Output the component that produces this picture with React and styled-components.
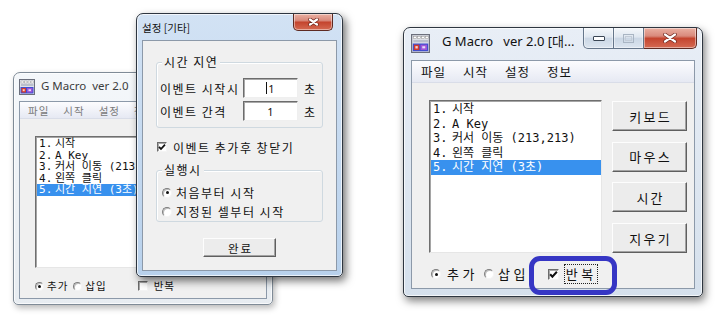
import styled, { createGlobalStyle } from "styled-components";

const KR = `"Noto Sans CJK KR", "Noto Sans", sans-serif`;
const UI = `"Noto Sans", "Noto Sans CJK KR", sans-serif`;
// half-width latin like Gulim, hangul falls back to the CJK face
const LIST = `"DejaVu Sans Mono", "Noto Sans CJK KR", monospace`;

const GlobalStyle = createGlobalStyle`
    html, body { margin: 0; padding: 0; background: #fff; }
    body { font-family: ${KR}; color: #111; }
    * { box-sizing: border-box; }
`;

const tones = {
    inactive: "linear-gradient(#f4f7fa, #e7ecf1)",
    active: "linear-gradient(#e8eef6, #d5e0ec)",
    aero: "linear-gradient(#d2e2f4, #b8d1ec)",
};

const shadows = {
    inactive: "2px 3px 6px rgba(0,0,0,.28)",
    active: "2px 4px 8px rgba(0,0,0,.5)",
    aero: "3px 4px 9px rgba(0,0,0,.55)",
};

const items = ["시작", "A Key", "커서 이동 (213,213)", "왼쪽 클릭", "시간 지연 (3초)"];

export default function App() {
    return (
        <>
            <GlobalStyle />
            <Desktop>
                {/* left screenshot: main window behind the settings dialog */}
                <Frame $x={13} $y={72} $w={260} $h={233} $pad={5} $tone="inactive" $z={1}>
                    <TitleBar $h={28} $pt={6}>
                        <MacroIcon size={16} />
                        <TitleText $fs={11.5} $dim>G Macro&nbsp; ver 2.0</TitleText>
                    </TitleBar>
                    <Client>
                        <MenuBar $h={17} $pl={8} $gap={14} $fs={10.5} $dim>
                            <span>파일</span>
                            <span>시작</span>
                            <span>설정</span>
                            <span>정보</span>
                        </MenuBar>
                        <Body $pt={17} $pl={15}>
                            <ListBox $w={170} $h={132} $fs={11} $lh={11.5}>
                                {items.map((text, i) => (
                                    <ListItem key={i} $lh={11.5} $selected={i === 4}>
                                        <Num $w={16}>{i + 1}.</Num>
                                        {text}
                                    </ListItem>
                                ))}
                            </ListBox>
                            <OptionRow $mt={12} $h={12} $fs={10.5} $ls={1}>
                                <Radio $size={9} $checked />
                                <OptionLabel $ml={3}>추가</OptionLabel>
                                <Radio $size={9} $ml={5} />
                                <OptionLabel $ml={3}>삽입</OptionLabel>
                                <CheckBox $size={10} $ml={31} />
                                <OptionLabel $ml={6}>반복</OptionLabel>
                            </OptionRow>
                        </Body>
                    </Client>
                </Frame>

                {/* settings dialog */}
                <Frame $x={136} $y={13} $w={207} $h={264} $pad={5} $tone="aero" $z={2}>
                    <TitleBar $h={26} $pt={8}>
                        <TitleText $fs={10.5} $font={KR}>설정 [기타]</TitleText>
                        <Captions $pt={8} $mr={4}>
                            <CapButton $w={40} $h={17} $kind="close" $round="both">
                                <CloseGlyph w={11} h={8} />
                            </CapButton>
                        </Captions>
                    </TitleBar>
                    <Client>
                        <DialogBody>
                            <Group $mt={21}>
                                <Legend>시간 지연</Legend>
                                <FieldGrid>
                                    <FieldLabel>이벤트 시작시</FieldLabel>
                                    <InputBox>
                                        <Caret />1
                                    </InputBox>
                                    <Unit>초</Unit>
                                    <FieldLabel>이벤트 간격</FieldLabel>
                                    <InputBox>1</InputBox>
                                    <Unit>초</Unit>
                                </FieldGrid>
                            </Group>
                            <DialogRow $mt={12} $pl={1}>
                                <CheckBox $size={10} $checked />
                                <OptionLabel $ml={6}>이벤트 추가후 창닫기</OptionLabel>
                            </DialogRow>
                            <Group $mt={16} $pt={12} $pb={0}>
                                <Legend>실행시</Legend>
                                <DialogRow $h={19} $pl={2}>
                                    <Radio $size={10} $checked />
                                    <OptionLabel $ml={4}>처음부터 시작</OptionLabel>
                                </DialogRow>
                                <DialogRow $h={19} $pl={2}>
                                    <Radio $size={10} />
                                    <OptionLabel $ml={4}>지정된 셀부터 시작</OptionLabel>
                                </DialogRow>
                            </Group>
                            <PushButton $w={73} $h={19} $fs={11.5} $center $mt={16}>
                                완료
                            </PushButton>
                        </DialogBody>
                    </Client>
                </Frame>

                {/* right screenshot */}
                <Frame $x={403} $y={27} $w={300} $h={270} $pad={7} $tone="active" $z={1}>
                    <TitleBar $h={32} $pt={6}>
                        <MacroIcon size={19} />
                        <TitleText $fs={13} $ml={6}>
                            G Macro&nbsp;&nbsp; ver 2.0 [대...
                        </TitleText>
                        <Captions $pt={6} $mr={-2}>
                            <CapButton $w={31} $h={21} $round="left">
                                <MinGlyph />
                            </CapButton>
                            <CapButton $w={30} $h={21}>
                                <MaxGlyph />
                            </CapButton>
                            <CapButton $w={53} $h={21} $kind="close" $round="right">
                                <CloseGlyph w={14} h={10} />
                            </CapButton>
                        </Captions>
                    </TitleBar>
                    <Client>
                        <MenuBar $h={22} $pl={9} $gap={17} $fs={12.5}>
                            <span>파일</span>
                            <span>시작</span>
                            <span>설정</span>
                            <span>정보</span>
                        </MenuBar>
                        <Body $pt={17} $pl={17}>
                            <MainRow>
                                <ListBox $w={173} $h={153} $fs={12} $lh={14.5}>
                                    {items.map((text, i) => (
                                        <ListItem key={i} $lh={14.5} $selected={i === 4}>
                                            <Num $w={19}>{i + 1}.</Num>
                                            {text}
                                        </ListItem>
                                    ))}
                                </ListBox>
                                <ButtonColumn>
                                    {["키보드", "마우스", "시간", "지우기"].map((label) => (
                                        <PushButton key={label} $w={75} $h={30} $fs={13} $ls={2.2}>
                                            {label}
                                        </PushButton>
                                    ))}
                                </ButtonColumn>
                            </MainRow>
                            <OptionRow $mt={13} $h={16} $fs={13} $ls={3.5} $pl={2}>
                                <Radio $size={10} $checked />
                                <OptionLabel $ml={6}>추가</OptionLabel>
                                <Radio $size={10} $ml={6} />
                                <OptionLabel $ml={4}>삽입</OptionLabel>
                                <CheckBox $size={11} $checked $ml={19} />
                                <OptionLabel $ml={6} $focus>반복</OptionLabel>
                            </OptionRow>
                        </Body>
                    </Client>
                </Frame>

                <Highlight />
            </Desktop>
        </>
    );
}

function MacroIcon({ size }) {
    return (
        <svg width={size} height={size} viewBox="0 0 16 16" style={{ flexShrink: 0 }}>
            <rect x="0.5" y="0.5" width="15" height="15" fill="#dfe2ea" stroke="#6b6f7c" />
            <rect x="2" y="2" width="2.5" height="2" fill="#fff" stroke="#888" strokeWidth="0.4" />
            <rect x="5.5" y="2" width="2.5" height="2" fill="#fff" stroke="#888" strokeWidth="0.4" />
            <rect x="9" y="2" width="2.5" height="2" fill="#fff" stroke="#888" strokeWidth="0.4" />
            <rect x="12" y="2" width="2.5" height="2" fill="#fff" stroke="#888" strokeWidth="0.4" />
            <rect x="2" y="5" width="12.5" height="2" fill="#b9bfcc" />
            <rect x="1.5" y="8" width="13" height="6.5" fill="#3f4fcf" />
            <rect x="2.5" y="9" width="4.5" height="4.5" fill="#d23a2e" />
            <rect x="3.7" y="10.2" width="2" height="2" fill="#f6d2cc" />
            <rect x="8" y="9" width="5.5" height="4.5" fill="#9d55d8" />
            <rect x="9.5" y="10.3" width="2.5" height="1.8" fill="#e8dcf7" />
        </svg>
    );
}

function CloseGlyph({ w, h }) {
    const d = `M2 1.5 L${w - 2} ${h - 1.5} M${w - 2} 1.5 L2 ${h - 1.5}`;
    return (
        <svg width={w} height={h} viewBox={`0 0 ${w} ${h}`}>
            <path d={d} stroke="#6a2218" strokeWidth="3.6" strokeLinecap="round" />
            <path d={d} stroke="#fff" strokeWidth="2.2" strokeLinecap="round" />
        </svg>
    );
}

function MinGlyph() {
    return (
        <svg width="12" height="6" viewBox="0 0 12 6">
            <rect x="0.5" y="1.5" width="11" height="4" rx="0.5" fill="#fff" stroke="#3b4654" />
        </svg>
    );
}

function MaxGlyph() {
    return (
        <svg width="11" height="9" viewBox="0 0 11 9">
            <rect x="0.5" y="0.5" width="10" height="8" fill="none" stroke="#a9b5c3" />
            <rect x="2.5" y="2.5" width="6" height="4" fill="none" stroke="#c3ccd7" />
        </svg>
    );
}

function CheckBox({ $size, $checked, $ml }) {
    return (
        <CheckSquare $size={$size} $ml={$ml}>
            {$checked && (
                <svg width={$size - 2} height={$size - 2} viewBox="0 0 8 8">
                    <path d="M1 3.8 L3 6 L7 1.6" fill="none" stroke="#111" strokeWidth="1.8" />
                </svg>
            )}
        </CheckSquare>
    );
}

const Desktop = styled.div`
    position: relative;
    width: 720px;
    height: 315px;
    overflow: hidden;
    background: #fff;
`;

const Frame = styled.div`
    position: absolute;
    left: ${({ $x }) => $x}px;
    top: ${({ $y }) => $y}px;
    width: ${({ $w }) => $w}px;
    height: ${({ $h }) => $h}px;
    z-index: ${({ $z }) => $z};
    display: flex;
    flex-direction: column;
    padding: 0 ${({ $pad }) => $pad}px ${({ $pad }) => $pad}px;
    border: 1px solid ${({ $tone }) => ($tone === "inactive" ? "#7f8b97" : "#2e3640")};
    border-radius: 7px 7px 5px 5px;
    background: ${({ $tone }) => tones[$tone]};
    box-shadow: ${({ $tone }) => shadows[$tone]}, inset 0 0 0 1px rgba(255, 255, 255, 0.7);
`;

const TitleBar = styled.div`
    height: ${({ $h }) => $h}px;
    flex-shrink: 0;
    display: flex;
    align-items: flex-start;
    padding-top: ${({ $pt }) => $pt}px;
    gap: 6px;
`;

const TitleText = styled.span`
    font-family: ${({ $font }) => $font || UI};
    font-size: ${({ $fs }) => $fs}px;
    line-height: 1.2;
    margin-left: ${({ $ml }) => $ml || 0}px;
    color: ${({ $dim }) => ($dim ? "#3c3c3c" : "#111")};
    white-space: nowrap;
`;

const Captions = styled.div`
    display: flex;
    margin-left: auto;
    margin-top: -${({ $pt }) => $pt}px;
    margin-right: ${({ $mr }) => $mr}px;
`;

const CapButton = styled.div`
    width: ${({ $w }) => $w}px;
    height: ${({ $h }) => $h}px;
    display: flex;
    align-items: center;
    justify-content: center;
    border: 1px solid ${({ $kind }) => ($kind === "close" ? "#5e2a22" : "#65768a")};
    border-top: none;
    border-left-width: ${({ $round }) => ($round === "left" || $round === "both" ? 1 : 0)}px;
    border-radius: ${({ $round }) =>
        $round === "left" ? "0 0 0 5px" : $round === "right" ? "0 0 5px 0" : $round === "both" ? "0 0 5px 5px" : "0"};
    background: ${({ $kind }) =>
        $kind === "close"
            ? "linear-gradient(#eab0a2, #d98a7c 40%, #c4452f 52%, #d56a52)"
            : "linear-gradient(#f4f7fa, #dfe7f0 45%, #cbd7e5 52%, #dbe5ef)"};
    box-shadow: inset 0 0 0 1px rgba(255, 255, 255, 0.45);
`;

const Client = styled.div`
    flex: 1;
    min-height: 0;
    display: flex;
    flex-direction: column;
    border: 1px solid #8c99a9;
    background: #f0f0f0;
    overflow: hidden;
`;

const MenuBar = styled.div`
    height: ${({ $h }) => $h}px;
    flex-shrink: 0;
    display: flex;
    align-items: center;
    gap: ${({ $gap }) => $gap}px;
    padding-left: ${({ $pl }) => $pl}px;
    font-size: ${({ $fs }) => $fs}px;
    letter-spacing: 1px;
    color: ${({ $dim }) => ($dim ? "#7a7a7a" : "#111")};
    background: linear-gradient(#fcfcfe, #e6e9f3);
    border-bottom: 1px solid #d9dde8;
`;

const Body = styled.div`
    flex: 1;
    display: flex;
    flex-direction: column;
    padding: ${({ $pt }) => $pt}px 0 0 ${({ $pl }) => $pl}px;
`;

const MainRow = styled.div`
    display: flex;
    gap: 10px;
    align-items: flex-start;
`;

const ListBox = styled.div`
    width: ${({ $w }) => $w}px;
    height: ${({ $h }) => $h}px;
    flex-shrink: 0;
    padding: 1px 0 0 1px;
    background: #fff;
    border: 1px solid;
    border-color: #6f6f6f #e6e6e6 #e6e6e6 #6f6f6f;
    box-shadow: inset 1px 1px 0 #a5a5a5;
    font-family: ${LIST};
    font-size: ${({ $fs }) => $fs}px;
    overflow: hidden;
`;

const ListItem = styled.div`
    height: ${({ $lh }) => $lh}px;
    line-height: ${({ $lh }) => $lh}px;
    display: flex;
    padding-left: 2px;
    white-space: pre;
    background: ${({ $selected }) => ($selected ? "#3891ee" : "transparent")};
    color: ${({ $selected }) => ($selected ? "#fff" : "#111")};
`;

const Num = styled.span`
    width: ${({ $w }) => $w}px;
    flex-shrink: 0;
`;

const ButtonColumn = styled.div`
    display: flex;
    flex-direction: column;
    gap: 10.7px;
    margin-top: 1px;
`;

const PushButton = styled.div`
    width: ${({ $w }) => $w}px;
    height: ${({ $h }) => $h}px;
    flex-shrink: 0;
    display: flex;
    align-items: center;
    justify-content: center;
    align-self: ${({ $center }) => ($center ? "center" : "auto")};
    margin-top: ${({ $mt }) => $mt || 0}px;
    padding-left: ${({ $ls }) => $ls ?? 1.8}px;
    font-size: ${({ $fs }) => $fs}px;
    letter-spacing: ${({ $ls }) => $ls ?? 1.8}px;
    color: #111;
    background: #ececec;
    border: 1px solid;
    border-color: #fdfdfd #5f5f5f #5f5f5f #fdfdfd;
    box-shadow: inset -1px -1px 0 #a3a3a3;
`;

const OptionRow = styled.div`
    display: flex;
    align-items: center;
    height: ${({ $h }) => $h}px;
    margin-top: ${({ $mt }) => $mt}px;
    padding-left: ${({ $pl }) => $pl || 0}px;
    font-size: ${({ $fs }) => $fs}px;
    letter-spacing: ${({ $ls }) => $ls}px;
    white-space: nowrap;
`;

const OptionLabel = styled.span`
    margin-left: ${({ $ml }) => $ml}px;
    line-height: 1.25;
    padding: ${({ $focus }) => ($focus ? "1px 0 1px 1px" : "0")};
    outline: ${({ $focus }) => ($focus ? "1px dotted #222" : "none")};
`;

const Radio = styled.span`
    position: relative;
    width: ${({ $size }) => $size}px;
    height: ${({ $size }) => $size}px;
    flex-shrink: 0;
    margin-left: ${({ $ml }) => $ml || 0}px;
    border-radius: 50%;
    border: 1px solid;
    border-color: #7d7d7d #f4f4f4 #f4f4f4 #7d7d7d;
    background: #fff;
    box-shadow: inset 1px 1px 0 #bdbdbd;

    &::after {
        content: "";
        display: ${({ $checked }) => ($checked ? "block" : "none")};
        position: absolute;
        left: 50%;
        top: 50%;
        width: 3px;
        height: 3px;
        margin: -1.5px 0 0 -1.5px;
        border-radius: 50%;
        background: #111;
    }
`;

const CheckSquare = styled.span`
    width: ${({ $size }) => $size}px;
    height: ${({ $size }) => $size}px;
    flex-shrink: 0;
    margin-left: ${({ $ml }) => $ml || 0}px;
    display: flex;
    align-items: center;
    justify-content: center;
    background: #fff;
    border: 1px solid;
    border-color: #6c6c6c #f4f4f4 #f4f4f4 #6c6c6c;
    box-shadow: inset 1px 1px 0 #a9a9a9;
`;

const DialogBody = styled.div`
    flex: 1;
    display: flex;
    flex-direction: column;
    padding: 0 13px;
    font-size: 12px;
    letter-spacing: 1.5px;
`;

const Group = styled.div`
    position: relative;
    margin-top: ${({ $mt }) => $mt}px;
    padding: ${({ $pt }) => $pt ?? 15}px 0 ${({ $pb }) => $pb ?? 6}px 3px;
    border: 1px solid #cfd9e0;
    border-radius: 3px;
    box-shadow: inset 1px 1px 0 #fff;
`;

const Legend = styled.span`
    position: absolute;
    left: 5px;
    top: -8px;
    padding: 0 2px;
    line-height: 14px;
    background: #f0f0f0;
`;

const FieldGrid = styled.div`
    display: grid;
    grid-template-columns: 83px 55px 1fr;
    grid-auto-rows: 20px;
    row-gap: 3px;
    align-items: center;
`;

const FieldLabel = styled.span`
    white-space: nowrap;
`;

const InputBox = styled.div`
    height: 20px;
    display: flex;
    align-items: center;
    justify-content: center;
    background: #fff;
    font-family: ${UI};
    font-size: 11px;
    letter-spacing: 0;
    border: 1px solid;
    border-color: #6c6c6c #efefef #efefef #6c6c6c;
    box-shadow: inset 1px 1px 0 #a9a9a9;
`;

const Caret = styled.span`
    width: 1px;
    height: 12px;
    margin-right: 1px;
    background: #111;
`;

const Unit = styled.span`
    padding-left: 6px;
`;

const DialogRow = styled.div`
    display: flex;
    align-items: center;
    height: ${({ $h }) => $h || 14}px;
    margin-top: ${({ $mt }) => $mt || 0}px;
    padding-left: ${({ $pl }) => $pl || 0}px;
    white-space: nowrap;
`;

const Highlight = styled.div`
    position: absolute;
    left: 529px;
    top: 256px;
    width: 88px;
    height: 39px;
    z-index: 5;
    border: 5px solid #3636c4;
    border-radius: 11px;
`;
